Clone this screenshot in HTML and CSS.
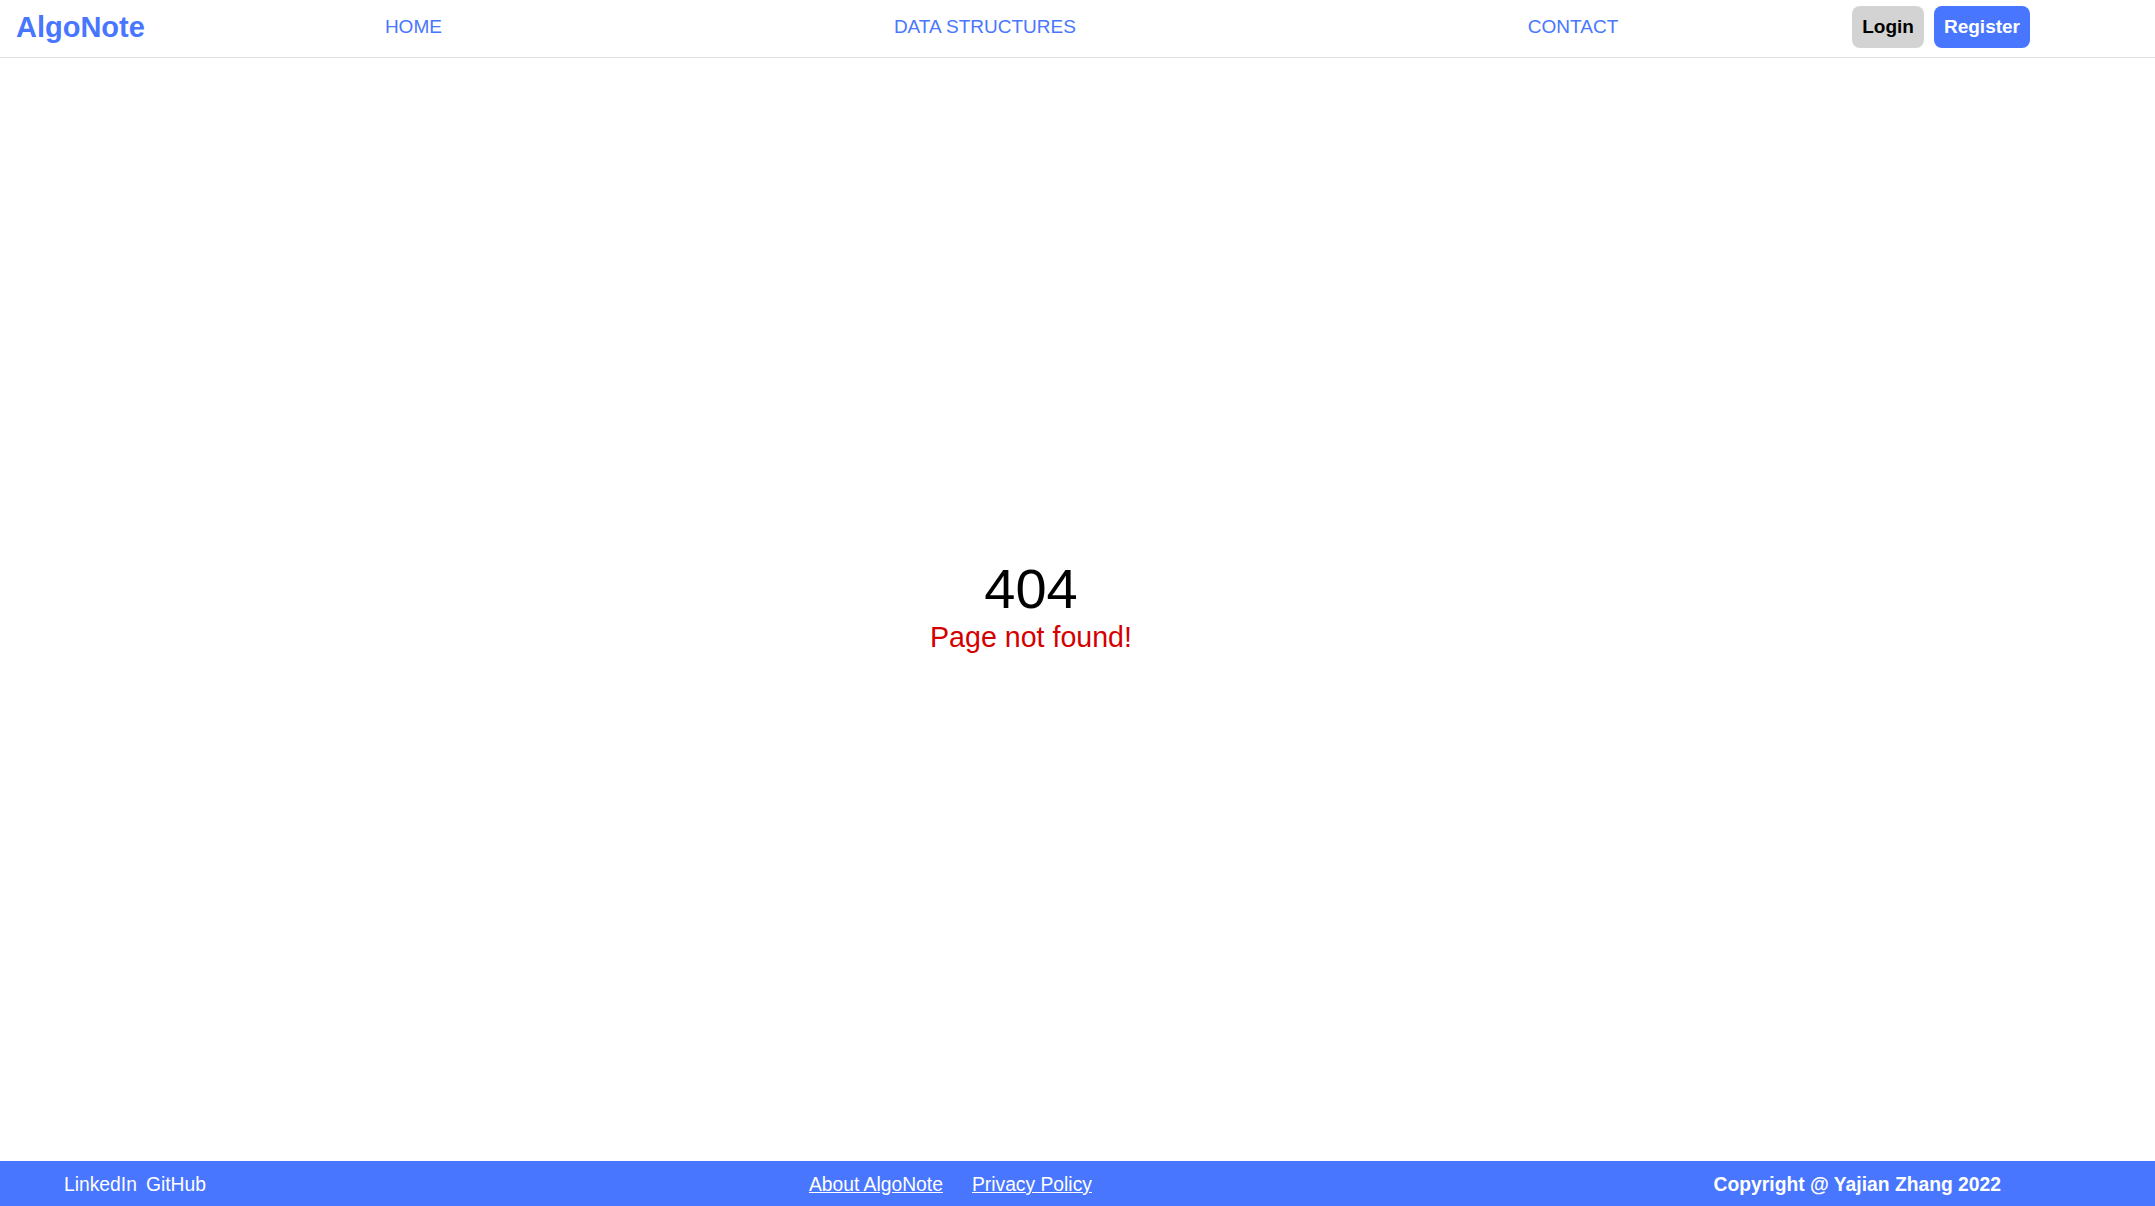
FILE: index.html
```html
<!DOCTYPE html>
<html lang="en">
<head>
<meta charset="utf-8">
<title>AlgoNote</title>
<link rel="stylesheet" href="styles.css">
</head>
<body>
<header class="topbar">
  <a class="logo" href="#">AlgoNote</a>
  <nav class="nav">
    <a class="nav-link" href="#">HOME</a>
    <a class="nav-link" href="#">DATA STRUCTURES</a>
    <a class="nav-link" href="#">CONTACT</a>
  </nav>
  <div class="auth">
    <button class="btn btn-login">Login</button>
    <button class="btn btn-register">Register</button>
  </div>
</header>
<main class="content">
  <div class="error-code">404</div>
  <div class="error-msg">Page not found!</div>
</main>
<footer class="footer">
  <div class="social">
    <a class="social-link" href="#">LinkedIn</a>
    <a class="social-link" href="#">GitHub</a>
  </div>
  <div class="info-links">
    <a class="info-link" href="#">About AlgoNote</a>
    <a class="info-link" href="#">Privacy Policy</a>
  </div>
  <div class="copyright">Copyright @ Yajian Zhang 2022</div>
</footer>
</body>
</html>
```

FILE: styles.css
```css
html, body {
  margin: 0;
  padding: 0;
  height: 100%;
}

body {
  display: flex;
  flex-direction: column;
  font-family: "Liberation Sans", Arial, sans-serif;
  background: #ffffff;
  color: #000;
}

a {
  text-decoration: none;
}

.topbar {
  display: flex;
  align-items: center;
  height: 42px;
  padding: 6px 125px 9px 16px;
  border-bottom: 1px solid #e3e3e3;
  flex: none;
}

.logo {
  font-size: 29px;
  font-weight: bold;
  color: #4876ff;
  line-height: 32px;
}

.nav {
  flex: 1;
  display: flex;
  justify-content: space-around;
  margin: 0 8px 0 14px;
}

.nav-link {
  font-size: 19px;
  color: #4876ff;
  line-height: 22px;
}

.auth {
  display: flex;
  gap: 10px;
}

.btn {
  font-family: "Liberation Sans", Arial, sans-serif;
  font-size: 19px;
  font-weight: bold;
  line-height: 22px;
  padding: 10px 10px;
  border: none;
  border-radius: 8px;
  cursor: pointer;
}

.btn-login {
  background: #d3d3d3;
  color: #000;
}

.btn-register {
  background: #4876ff;
  color: #fff;
}

.content {
  flex: 1;
  display: flex;
  flex-direction: column;
  align-items: center;
  justify-content: center;
  padding: 0 93px 10px 0;
}

.error-code {
  font-size: 56px;
  color: #000;
}

.error-msg {
  font-size: 28.6px;
  color: #d40000;
}

.footer {
  flex: none;
  display: flex;
  align-items: center;
  height: 42px;
  padding: 3px 154px 0 64px;
  background: #4876ff;
  color: #fff;
  font-size: 19.3px;
}

.social {
  display: flex;
  gap: 9px;
}

.social-link {
  color: #fff;
}

.info-links {
  display: flex;
  gap: 29px;
  margin-left: 603px;
}

.info-link {
  color: #fff;
  text-decoration: underline;
}

.copyright {
  margin-left: auto;
  font-weight: bold;
}
```
